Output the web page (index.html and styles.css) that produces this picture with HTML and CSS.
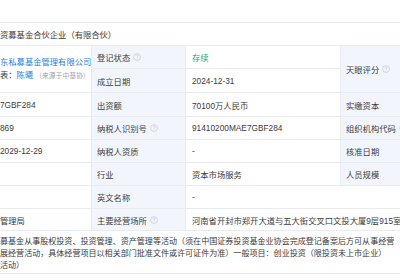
FILE: index.html
```html
<!DOCTYPE html>
<html lang="zh-CN">
<head>
<meta charset="utf-8">
<title>企业信息</title>
<link rel="stylesheet" href="styles.css">
</head>
<body>
<div class="page">
  <div class="top"></div>
  <div class="grid">
    <div class="cell span4">资募基金合伙企业（有限合伙）</div>

    <div class="cell rows2 company">
      <div class="line"><span class="link">东私募基金管理有限公司</span></div>
      <div class="line">表：<span class="link">陈曦</span><span class="src">（来源于中基协）</span></div>
    </div>
    <div class="cell lab">登记状态<svg class="qi" viewBox="0 0 10 10"><circle cx="5" cy="5" r="4.3"/><path d="M3.6 3.9a1.4 1.4 0 1 1 2 1.2c-.5.3-.6.6-.6 1.1"/><circle class="dot" cx="5" cy="7.4" r=".45"/></svg></div>
    <div class="cell val green">存续</div>
    <div class="cell lab rows2">天眼评分<svg class="qi" viewBox="0 0 10 10"><circle cx="5" cy="5" r="4.3"/><path d="M3.6 3.9a1.4 1.4 0 1 1 2 1.2c-.5.3-.6.6-.6 1.1"/><circle class="dot" cx="5" cy="7.4" r=".45"/></svg></div>

    <div class="cell lab">成立日期</div>
    <div class="cell val">2024-12-31</div>

    <div class="cell">7GBF284</div>
    <div class="cell lab">出资额</div>
    <div class="cell val">70100万人民币</div>
    <div class="cell lab">实缴资本</div>

    <div class="cell">869</div>
    <div class="cell lab">纳税人识别号<svg class="qi" viewBox="0 0 10 10"><circle cx="5" cy="5" r="4.3"/><path d="M3.6 3.9a1.4 1.4 0 1 1 2 1.2c-.5.3-.6.6-.6 1.1"/><circle class="dot" cx="5" cy="7.4" r=".45"/></svg></div>
    <div class="cell val">91410200MAE7GBF284</div>
    <div class="cell lab">组织机构代码<svg class="qi" viewBox="0 0 10 10"><circle cx="5" cy="5" r="4.3"/><path d="M3.6 3.9a1.4 1.4 0 1 1 2 1.2c-.5.3-.6.6-.6 1.1"/><circle class="dot" cx="5" cy="7.4" r=".45"/></svg></div>

    <div class="cell">2029-12-29</div>
    <div class="cell lab">纳税人资质</div>
    <div class="cell val">-</div>
    <div class="cell lab">核准日期</div>

    <div class="cell"></div>
    <div class="cell lab">行业</div>
    <div class="cell val">资本市场服务</div>
    <div class="cell lab">人员规模</div>

    <div class="cell"></div>
    <div class="cell lab">英文名称</div>
    <div class="cell val span2">-</div>

    <div class="cell">管理局</div>
    <div class="cell lab">主要经营场所<svg class="qi" viewBox="0 0 10 10"><circle cx="5" cy="5" r="4.3"/><path d="M3.6 3.9a1.4 1.4 0 1 1 2 1.2c-.5.3-.6.6-.6 1.1"/><circle class="dot" cx="5" cy="7.4" r=".45"/></svg></div>
    <div class="cell val span2">河南省开封市郑开大道与五大街交叉口文投大厦9层915室</div>

    <div class="cell span4 scope">
      <div class="sline">募基金从事股权投资、投资管理、资产管理等活动（须在中国证券投资基金业协会完成登记备案后方可从事经营</div>
      <div class="sline">展经营活动，具体经营项目以相关部门批准文件或许可证件为准）一般项目：创业投资（限投资未上市企业）</div>
      <div class="sline">活动）</div>
    </div>
  </div>
</div>
</body>
</html>
```

FILE: styles.css
```css
html, body {
  margin: 0;
  padding: 0;
  background: #ffffff;
}

body {
  font-family: "Liberation Sans", "Noto Sans CJK SC", sans-serif;
  font-size: 8.3px;
  color: #3a3a3a;
}

.page {
  width: 400px;
  height: 280px;
  overflow: hidden;
}

.top {
  height: 22px;
}

.grid {
  display: grid;
  grid-template-columns: 91px 93px 154px 90px;
  grid-template-rows: 22px 22px 23px 23px 22px 22px 22px 22px 21px 42px;
  gap: 1px;
  width: 431px;
  background: #e8ecf1;
  border-top: 1px solid #e8ecf1;
  border-bottom: 1px solid #e8ecf1;
}

.cell {
  background: #ffffff;
  display: flex;
  align-items: center;
  white-space: nowrap;
  overflow: hidden;
}

.lab {
  background: #f2f6fc;
  padding-left: 5px;
  color: #404040;
}

.val {
  padding-left: 6px;
}

.span4 {
  grid-column: span 4;
}

.span2 {
  grid-column: span 2;
}

.rows2 {
  grid-row: span 2;
}

.green {
  color: #22a36b;
}

.company {
  flex-direction: column;
  align-items: flex-start;
  justify-content: center;
  line-height: 13px;
}

.company .line {
  display: flex;
  align-items: center;
}

.link {
  color: #2a7fe0;
}

.src {
  color: #a0a4aa;
  font-size: 6.8px;
  margin-left: 2px;
}

.qi {
  width: 8px;
  height: 8px;
  margin-left: 3px;
  fill: none;
  stroke: #c4c8ce;
  stroke-width: 0.8;
  flex: none;
}

.qi .dot {
  fill: #c4c8ce;
  stroke: none;
}

.scope {
  display: block;
  padding-top: 5px;
  line-height: 12px;
}

.sline {
  white-space: nowrap;
  font-size: 8.05px;
}
```
